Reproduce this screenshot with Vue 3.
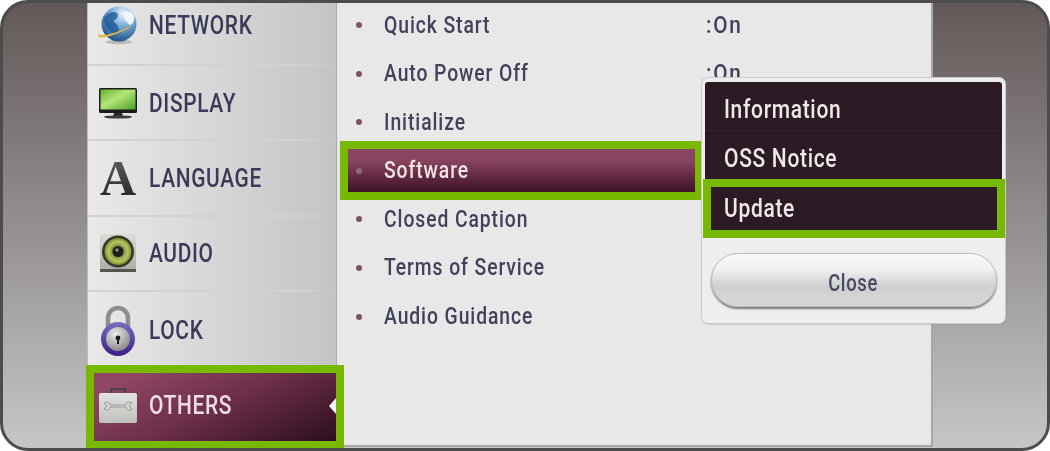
<script setup>
const rows = [
  { label: 'Quick Start', value: ':On' },
  { label: 'Auto Power Off', value: ':On' },
  { label: 'Initialize', value: '' },
  { label: 'Software', value: '', active: true },
  { label: 'Closed Caption', value: '' },
  { label: 'Terms of Service', value: '' },
  { label: 'Audio Guidance', value: ':Off' },
]
</script>

<template>
  <div class="frame">
    <aside class="sidebar">
      <div class="side-row first">
        <svg class="icon" viewBox="0 0 40 40" width="40" height="40">
          <defs>
            <radialGradient id="globe" cx="0.62" cy="0.2" r="0.85">
              <stop offset="0" stop-color="#eef5fb" />
              <stop offset="0.4" stop-color="#7fb0da" />
              <stop offset="1" stop-color="#1b4b82" />
            </radialGradient>
          </defs>
          <ellipse cx="21" cy="37" rx="13" ry="2.2" fill="#9a9a9a" opacity=".6" />
          <circle cx="21" cy="19" r="17.5" fill="url(#globe)" />
          <path d="M6 13c4-6 10-7 13-5 2 3 0 6-4 8 4 3 8 7 4 13-7-1-13-7-13-16z" fill="#1d5a98" opacity=".8" />
          <path d="M26 7c4-2 8 0 10 4 1 4-1 8-4 9-3-2-8-7-6-13z" fill="#f1f6fa" />
          <path d="M0 29c-1 5 7 4 15 1 9-3 17-7 19-10-5 3-12 6-18 8-7 2-13 3-16 1z" fill="#e2b93f" />
        </svg>
        <span class="side-text">NETWORK</span>
      </div>
      <div class="side-row">
        <svg class="icon" viewBox="0 0 40 40" width="40" height="40">
          <defs>
            <linearGradient id="screen" x1="0" y1="0" x2="1" y2="1">
              <stop offset="0" stop-color="#5fb22f" />
              <stop offset="0.45" stop-color="#b4e57a" />
              <stop offset="1" stop-color="#4a9f22" />
            </linearGradient>
          </defs>
          <rect x="1" y="5" width="38" height="25" rx="1.5" fill="#1a1c18" />
          <rect x="2.5" y="6.5" width="35" height="20" fill="url(#screen)" />
          <path d="M16 30h8l1 3h-10z" fill="#2b2b2b" />
          <ellipse cx="20" cy="34" rx="14" ry="1.6" fill="#3a3a3a" />
        </svg>
        <span class="side-text">DISPLAY</span>
      </div>
      <div class="side-row">
        <span class="letter">A</span>
        <span class="side-text">LANGUAGE</span>
      </div>
      <div class="side-row">
        <svg class="icon" viewBox="0 0 40 40" width="40" height="40">
          <defs>
            <linearGradient id="box" x1="0" y1="0" x2="0" y2="1">
              <stop offset="0" stop-color="#dcdcd4" />
              <stop offset="1" stop-color="#aaaaa2" />
            </linearGradient>
            <radialGradient id="cone" cx="0.5" cy="0.5" r="0.5">
              <stop offset="0.3" stop-color="#6d7840" />
              <stop offset="0.72" stop-color="#b9c65e" />
              <stop offset="1" stop-color="#7c8a30" />
            </radialGradient>
          </defs>
          <rect x="2" y="1" width="36" height="38" rx="3" fill="url(#box)" />
          <rect x="2" y="36" width="36" height="3" fill="#55554f" />
          <circle cx="20" cy="18.5" r="16" fill="#34372b" />
          <circle cx="20" cy="18.5" r="13.5" fill="url(#cone)" />
          <circle cx="20" cy="18.5" r="5.5" fill="#1e1e1a" />
          <circle cx="19" cy="17" r="1.8" fill="#8b8b80" />
        </svg>
        <span class="side-text">AUDIO</span>
      </div>
      <div class="side-row">
        <svg class="icon tall" viewBox="0 0 40 52" width="40" height="52">
          <defs>
            <linearGradient id="ring" x1="0" y1="0" x2="0" y2="1">
              <stop offset="0" stop-color="#7a6cc0" />
              <stop offset="1" stop-color="#3a1f86" />
            </linearGradient>
            <radialGradient id="plate" cx="0.4" cy="0.3" r="0.8">
              <stop offset="0" stop-color="#ededed" />
              <stop offset="1" stop-color="#7b7b80" />
            </radialGradient>
          </defs>
          <path d="M10 22V13a10 10 0 0 1 20 0v9" fill="none" stroke="#8e8e8e" stroke-width="4.5" />
          <circle cx="20" cy="34" r="17" fill="url(#ring)" />
          <circle cx="20" cy="34" r="12" fill="url(#plate)" />
          <circle cx="20" cy="33" r="2.4" fill="#1c1c1c" />
          <rect x="19" y="34" width="2" height="5" fill="#1c1c1c" />
        </svg>
        <span class="side-text">LOCK</span>
      </div>
      <div class="side-row others">
        <svg class="icon" viewBox="0 0 40 40" width="40" height="40">
          <defs>
            <linearGradient id="case" x1="0" y1="0" x2="0" y2="1">
              <stop offset="0" stop-color="#e2e2e0" />
              <stop offset="1" stop-color="#c0c0bd" />
            </linearGradient>
          </defs>
          <path d="M13 8V4h14v4" fill="none" stroke="#4a4245" stroke-width="2" />
          <rect x="1" y="8" width="38" height="30" rx="2" fill="url(#case)" />
          <path d="M6 18c3-2 6-1 6 2h16c0-3 3-4 6-2l-3 3 3 3c-3 2-6 1-6-2H12c0 3-3 4-6 2l3-3z" fill="#d4d4d2" stroke="#8e8e8b" stroke-width=".8" />
        </svg>
        <span class="side-text">OTHERS</span>
        <i class="pointer"></i>
      </div>
    </aside>

    <main class="panel">
      <ul class="list">
        <li v-for="row in rows" :key="row.label" class="item" :class="{ active: row.active }">
          <i class="bullet"></i>
          <span class="label">{{ row.label }}</span>
          <span class="value">{{ row.value }}</span>
        </li>
      </ul>
    </main>

    <section class="popup">
      <div class="menu">
        <div class="menu-row"><span>Information</span></div>
        <div class="menu-row"><span>OSS Notice</span></div>
        <div class="menu-row update"><span>Update</span></div>
      </div>
      <button class="close"><span>Close</span></button>
    </section>
  </div>
</template>

<style>
html, body { margin: 0; background: #fff; }
</style>

<style scoped>
.frame {
  position: relative;
  box-sizing: border-box;
  width: 1050px;
  height: 451px;
  display: flex;
  align-items: stretch;
  padding: 0 114px 1px 84px;
  border: 3px solid #4c4c4c;
  border-radius: 28px;
  background: linear-gradient(#625858, #c6c6c6);
  overflow: hidden;
  font-family: Roboto, "Liberation Sans", sans-serif;
  font-weight: 500;
}
.sidebar {
  flex: none;
  width: 250px;
  box-sizing: border-box;
  background: linear-gradient(90deg, #e9e9e9, #c4c4c4);
  border-left: 1px solid #bdbdbd;
  border-right: 1px solid #a9a9a9;
}
.side-row {
  box-sizing: border-box;
  height: 75.4px;
  display: flex;
  align-items: center;
  padding-left: 10px;
  font-size: 25.5px;
  color: #393a58;
  border-bottom: 2px solid;
  border-image: linear-gradient(90deg, #d2d2d2 80%, rgba(210, 210, 210, 0)) 1;
}
.side-text {
  display: inline-block;
  transform: scaleX(.82);
  transform-origin: left center;
  letter-spacing: .8px;
  filter: blur(.5px);
}
.first { height: 63px; padding-bottom: 18px; }
.icon { flex: none; width: 40px; margin-right: 11px; filter: blur(.4px); }
.tall { height: 52px; margin-top: 2px; }
.letter {
  flex: none;
  width: 40px;
  margin-right: 11px;
  text-align: center;
  font-family: "Liberation Serif", serif;
  font-weight: 700;
  font-size: 50px;
  line-height: 50px;
  background: linear-gradient(#666, #1e1e1e);
  -webkit-background-clip: text;
  background-clip: text;
  color: transparent;
  filter: blur(.4px);
}
.side-row:nth-child(5) { border-bottom: 0; }
.others {
  position: relative;
  z-index: 2;
  height: 68px;
  margin: 5px 0 0 6px;
  padding: 0 0 4px 4px;
  border: 0;
  color: #eedde4;
  background: linear-gradient(155deg, #8f4765 10%, #6d2f49 50%, #2d0e1c);
  outline: 8px solid #76b900;
}
.pointer {
  position: absolute;
  right: 0;
  top: 25px;
  border: 8px solid transparent;
  border-left: 0;
  border-right: 7px solid #f4f4f4;
}
.panel {
  flex: none;
  width: 596px;
  box-sizing: border-box;
  background: #e8e8e8;
  border-right: 2px solid #a7a7a7;
  border-bottom: 2px solid #a7a7a7;
}
.list {
  list-style: none;
  margin: 0;
  padding: .5px 0 0 11px;
  display: flex;
  flex-direction: column;
  gap: 5.6px;
}
.item {
  position: relative;
  display: flex;
  align-items: center;
  height: 43px;
  width: 347px;
  box-sizing: border-box;
  padding-left: 8px;
  color: #40415a;
  font-size: 23px;
}
.bullet {
  flex: none;
  width: 6px;
  height: 6px;
  margin-right: 22px;
  border-radius: 50%;
  background: #7b5465;
  filter: blur(.4px);
}
.label {
  flex: none;
  width: 322px;
  display: inline-block;
  transform: scaleX(.84);
  transform-origin: left center;
  letter-spacing: 1.1px;
  filter: blur(.5px);
}
.value {
  flex: none;
  white-space: nowrap;
  letter-spacing: 2px;
  filter: blur(.5px);
  transform: scaleX(.9);
  transform-origin: left center;
}
.active {
  z-index: 1;
  color: #f0e4e8;
  background: linear-gradient(#8a4660 0 25%, #3e1125);
  outline: 8px solid #76b900;
}
.active .bullet { background: #8e6b7b; }
.popup {
  position: absolute;
  z-index: 3;
  left: 699px;
  top: 75px;
  width: 303px;
  height: 244.5px;
  box-sizing: border-box;
  padding: 4px 3px;
  background: #eeeeee;
  border-radius: 6px;
  box-shadow: 0 0 0 1px #c9c9c9, 1px 1px 2px #8c8c8c;
  display: flex;
  flex-direction: column;
}
.menu {
  background: #2c1a24;
  border-radius: 3px 3px 0 0;
  color: #eee8ea;
  font-size: 25px;
  padding-top: 3px;
}
.menu-row {
  box-sizing: border-box;
  height: 49px;
  line-height: 49px;
  padding-left: 19px;
  border-bottom: 1px solid #1f1118;
}
.menu-row span,
.close span {
  display: inline-block;
  transform: scaleX(.84);
  transform-origin: left center;
  letter-spacing: .8px;
  filter: blur(.5px);
}
.update {
  position: relative;
  border: 0;
  height: 43px;
  line-height: 43px;
  margin: 4px 5px 0 6px;
  padding-left: 13px;
  outline: 8px solid #76b900;
}
.close {
  align-self: center;
  margin-top: 23px;
  width: 286px;
  height: 54px;
  border: 1px solid #bcbcbc;
  border-radius: 27px;
  background: linear-gradient(#f9f9f9, #f0f0f0 30%, #cfcfcf 62%, #d8d8d8);
  box-shadow: 0 2px 2px #777;
  color: #474a63;
  font: 500 23px Roboto, "Liberation Sans", sans-serif;
  padding: 6px 0 0;
}
.close span { transform: scaleX(.8); transform-origin: center; }
</style>
